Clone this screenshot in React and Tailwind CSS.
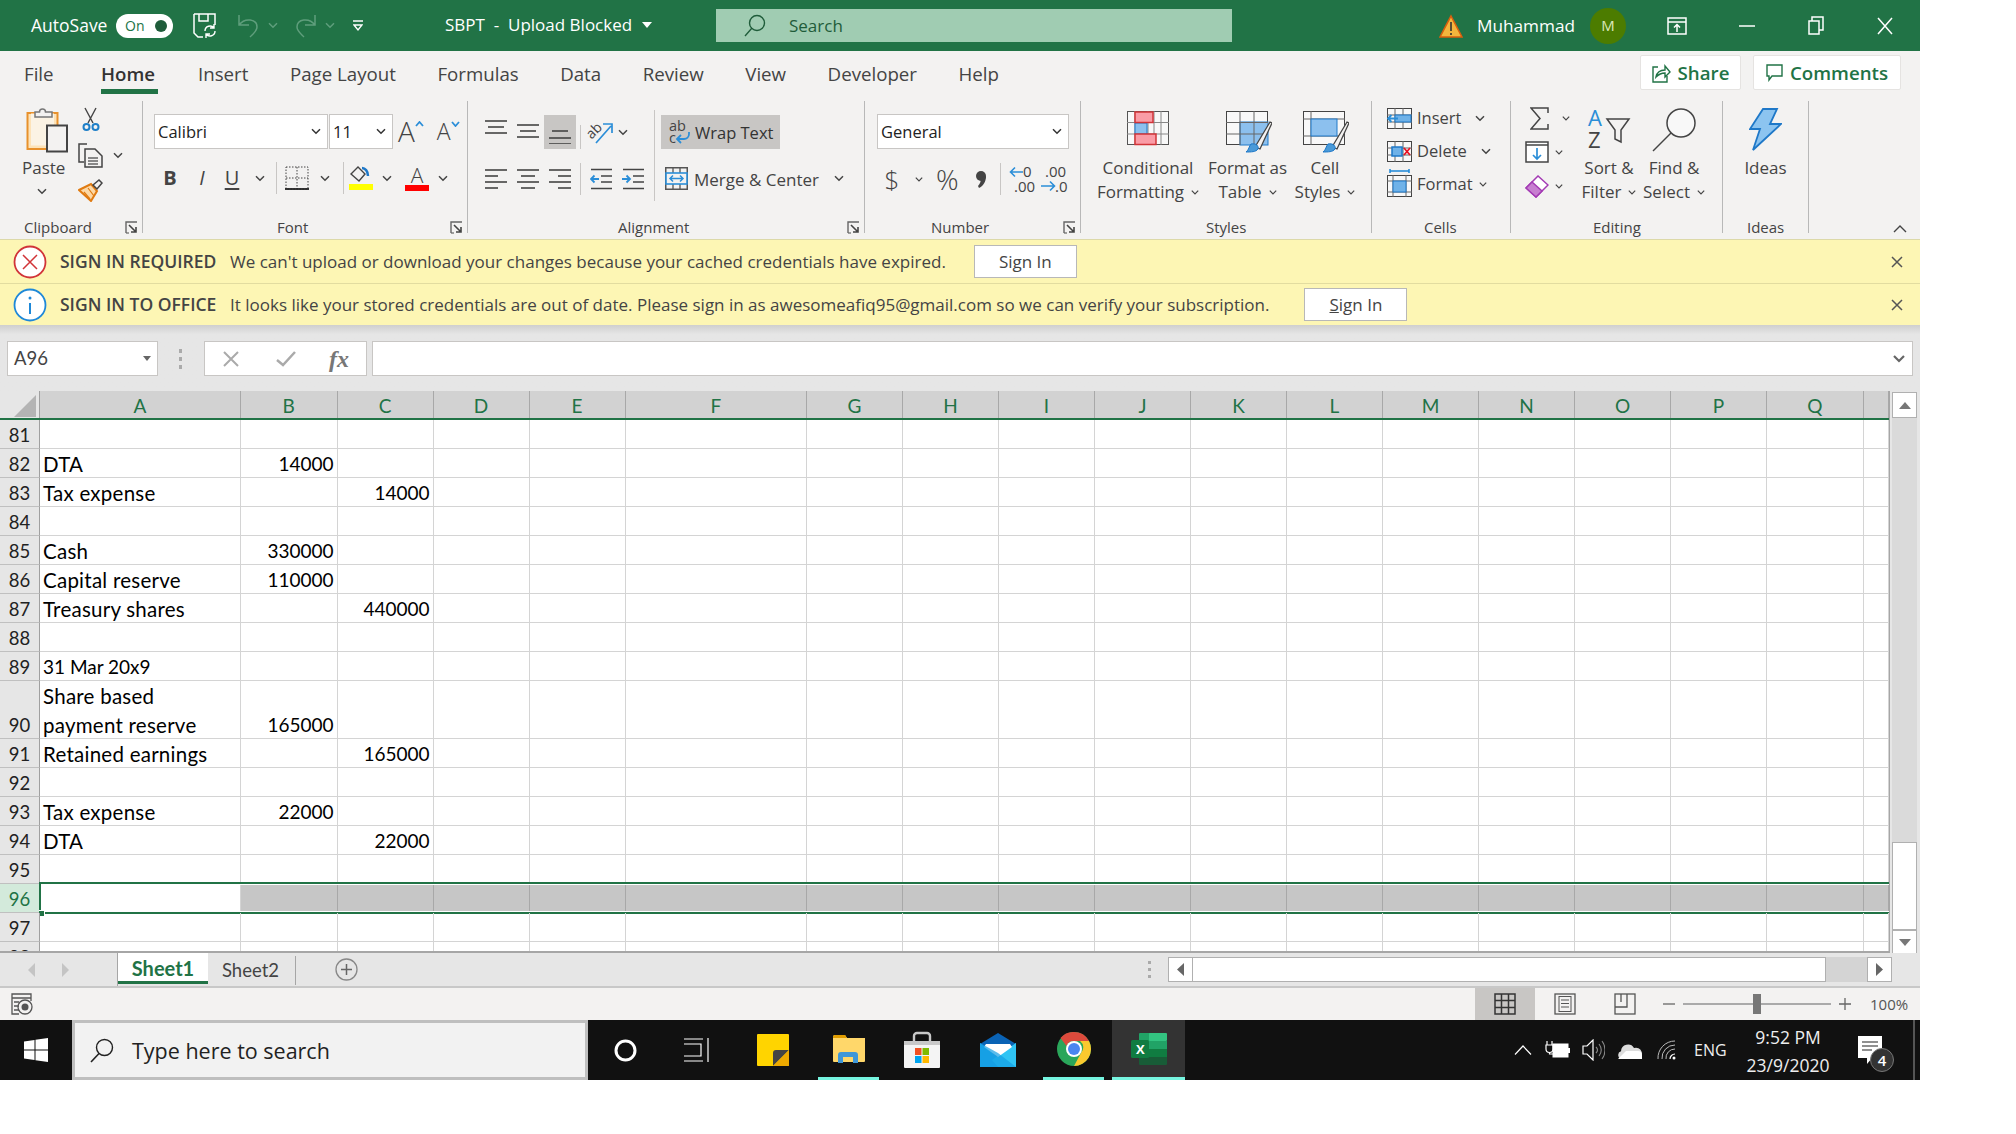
import React from "react";

const Chev = ({ c = "#444", w = 10, className = "" }) => (
  <svg width={w} height="7" viewBox="0 0 10 7" className={"shrink-0 " + className}>
    <path d="M1 1.2 5 5.2 9 1.2" fill="none" stroke={c} strokeWidth="1.5" />
  </svg>
);

const Paste = () => (
  <svg width="42" height="46" viewBox="0 0 42 46">
    <rect x="1.5" y="6" width="30" height="36" fill="#fde3b8" stroke="#e8912c" strokeWidth="2" />
    <rect x="5" y="6.5" width="23" height="32" fill="#fbf3e4" />
    <path d="M9 10V5h4.5a3 3 0 0 1 6 0H26v5z" fill="#f3f2f1" stroke="#777" strokeWidth="1.5" />
    <rect x="21" y="18.5" width="20" height="26" fill="#f3f2f1" stroke="#444" strokeWidth="2" />
  </svg>
);
const Scissors = () => (
  <svg width="18" height="25" viewBox="0 0 18 25">
    <path d="M3 1 11 16M14 1 6 16" stroke="#444" strokeWidth="1.4" fill="none" />
    <circle cx="4.5" cy="20" r="3" fill="none" stroke="#1e7fc8" strokeWidth="2" />
    <circle cx="13.5" cy="20" r="3" fill="none" stroke="#1e7fc8" strokeWidth="2" />
  </svg>
);
const CopyI = () => (
  <svg width="25" height="25" viewBox="0 0 25 25">
    <path d="M9 1H1v18h5" fill="none" stroke="#444" strokeWidth="1.5" />
    <path d="M7 6h10l7 7v11H7z" fill="#f3f2f1" stroke="#444" strokeWidth="1.5" />
    <path d="M10 15h10M10 18h10M10 21h10" stroke="#666" strokeWidth="1.3" />
  </svg>
);
const Painter = () => (
  <svg width="25" height="23" viewBox="0 0 25 23">
    <path d="M1 11 13 5l6 7-6 10z" fill="#fcd9a8" stroke="#e07b12" strokeWidth="2" />
    <path d="M6 13l6 7M10 9l6 8" stroke="#e07b12" strokeWidth="1.2" />
    <path d="M15 6 21 1l3 3-5 6z" fill="#f3f2f1" stroke="#444" strokeWidth="1.5" />
  </svg>
);
const Launcher = () => (
  <svg width="13" height="13" viewBox="0 0 13 13" className="shrink-0">
    <path d="M1 12V1h11" fill="none" stroke="#666" strokeWidth="1.4" />
    <path d="M4 4l7 7M11 6v5H6" fill="none" stroke="#444" strokeWidth="1.6" />
    <path d="M1 12h3" stroke="#666" strokeWidth="1.2" />
  </svg>
);
const Lines = ({ rows }) => (
  <svg width="22" height="26" viewBox="0 0 22 26">
    {rows.map(([y, x1, x2], i) => (
      <path key={i} d={`M${x1} ${y}H${x2}`} stroke="#444" strokeWidth="1.6" />
    ))}
  </svg>
);
const Orient = () => (
  <svg width="26" height="24" viewBox="0 0 26 24" className="overflow-visible">
    <text x="0" y="15" fontSize="14" fill="#444" transform="rotate(-45 8 12)" fontFamily="Open Sans">ab</text>
    <path d="M9 23 24 6M16 4h9v9" fill="none" stroke="#2b8ed8" strokeWidth="1.7" />
  </svg>
);
const Indent = ({ dir }) => (
  <svg width="22" height="22" viewBox="0 0 22 22">
    <path d="M1 1.5h21M11 8h11M11 14h11M1 20.5h21" stroke="#444" strokeWidth="1.6" />
    {dir === "l" ? (
      <path d="M1 11h8M4.500 7.500 1 11l3.500 3.500" fill="none" stroke="#2b8ed8" strokeWidth="1.8" />
    ) : (
      <path d="M0 11h8M4.500 7.500 8 11l-3.500 3.500" fill="none" stroke="#2b8ed8" strokeWidth="1.8" />
    )}
  </svg>
);
const WrapI = () => (
  <svg width="22" height="25" viewBox="0 0 22 25" className="overflow-visible shrink-0">
    <text x="0" y="11" fontSize="14.500" fill="#444" fontFamily="Open Sans">ab</text>
    <text x="0" y="23" fontSize="14.500" fill="#444" fontFamily="Open Sans">c</text>
    <path d="M20 12v2a5 5 0 0 1-5 5H9M12 15l-4 4 4 4" fill="none" stroke="#2b8ed8" strokeWidth="1.8" />
  </svg>
);
const MergeI = () => (
  <svg width="23" height="23" viewBox="0 0 23 23" className="shrink-0">
    <rect x="0.750" y="0.750" width="21.500" height="21.500" fill="none" stroke="#555" strokeWidth="1.500" />
    <path d="M8 1v5M15 1v5M8 17v5M15 17v5" stroke="#555" strokeWidth="1.300" />
    <rect x="1" y="6" width="21" height="11" fill="#f3f2f1" stroke="#2b8ed8" strokeWidth="1.600" />
    <path d="M5 11.500h13M8 8.500l-3 3 3 3M15 8.500l3 3-3 3" fill="none" stroke="#2b8ed8" strokeWidth="1.500" />
  </svg>
);
const CondI = () => (
  <svg width="42" height="35" viewBox="0 0 42 35">
    <rect x="0.500" y="0.500" width="41" height="33" fill="#f8f8f8" stroke="#555" />
    <path d="M8 0v34M21 0v34M27 0v34M34 0v34M0 11.500h42M0 23h42" stroke="#888" />
    <rect x="8" y="12" width="12" height="11" fill="#8cc0ee" stroke="#1e78c8" />
    <rect x="8" y="1" width="18" height="10.500" fill="#fa9ca6" stroke="#d13438" strokeWidth="1.500" />
    <rect x="8" y="23" width="21" height="10.500" fill="#fa9ca6" stroke="#d13438" strokeWidth="1.500" />
  </svg>
);
const Brush = () => (
  <g>
    <path d="M29 36 44 11l2 1-12 26z" fill="#f3f2f1" stroke="#444" strokeWidth="1.300" />
    <path d="M25 33c5-1 8 2 7 5-2 3-7 3-12 3 3-2 3-6 5-8z" fill="#4a9ad8" stroke="#1e78c8" />
  </g>
);
const FmtTableI = () => (
  <svg width="46" height="42" viewBox="0 0 46 42">
    <rect x="0.500" y="0.500" width="41" height="33" fill="#f8f8f8" stroke="#444" />
    <rect x="14" y="11" width="28" height="23" fill="#8cc0ee" stroke="#1e78c8" />
    <path d="M14 0v34M28 0v34M0 11.500h42M0 23h42" stroke="#666" />
    <Brush />
  </svg>
);
const CellStyleI = () => (
  <svg width="46" height="42" viewBox="0 0 46 42">
    <rect x="0.500" y="0.500" width="41" height="33" fill="#f8f8f8" stroke="#444" />
    <path d="M8 0v34M0 8h42M0 25h42" stroke="#666" />
    <rect x="8" y="8" width="26" height="17" fill="#8cc0ee" stroke="#1e78c8" />
    <Brush />
  </svg>
);
const CellGrid = ({ children }) => (
  <svg width="25" height="23" viewBox="0 0 25 23">
    <rect x="0.500" y="1.500" width="24" height="20" fill="#f8f8f8" stroke="#444" />
    <path d="M8 1v21M16 1v21M0 8h25M0 15h25" stroke="#666" />
    {children}
  </svg>
);
const Bolt = () => (
  <svg width="33" height="43" viewBox="0 0 33 43">
    <path d="M14 1h14l-7 15h11L4 42l7-21H1z" fill="#8cc4f0" stroke="#1e78c8" strokeWidth="1.800" />
  </svg>
);
const Group = ({ w, pl, label, launcher, body, children }) => (
  <div className={"flex flex-col h-[132px] shrink-0 border-r border-[#b8b8b8] " + w}>
    <div className={"flex-1 min-h-0 " + body}>{children}</div>
    <div className={"flex items-center h-[24px] pt-[13px] text-[15px] text-[#444] pr-[4px] " + pl}>
      <span>{label}</span>
      {launcher && <span className="ml-auto"><Launcher /></span>}
    </div>
  </div>
);
const Big = ({ w, icon, l1, l2, iconH = "h-[48px]" }) => (
  <div className={"flex flex-col items-center shrink-0 " + w}>
    <div className={"flex items-start justify-center " + iconH}>{icon}</div>
    <div className="leading-[24px] text-[17px] text-[#444] whitespace-nowrap">{l1}</div>
    {l2 && <div className="leading-[24px] text-[17px] text-[#444] whitespace-nowrap flex items-center gap-[7px]">{l2}<Chev w={8} /></div>}
  </div>
);
const Sel = ({ w, children }) => (
  <div className={"h-[35px] bg-white border border-[#c8c6c4] flex items-center justify-between px-[3px] pr-[6px] text-[16.500px] text-[#222] " + w}>
    <span className="pt-[2px]">{children}</span>
    <Chev c="#333" />
  </div>
);

const Tabs = ["Insert", "Page Layout", "Formulas", "Data", "Review", "View", "Developer", "Help"];
const TabRow = () => (
  <div className="h-[50px] bg-[#f3f2f1] flex items-start pl-[24px] shrink-0 text-[18.700px] text-[#444]">
    <div className="flex pt-[10px] leading-[26px]">
      <span className="w-[77px]">File</span>
      <span className="w-[57px] mr-[40px] text-[#333] font-semibold border-b-[5px] border-[#217346] h-[33px]">Home</span>
      <div className="flex gap-[41.500px]">
        {Tabs.map((t) => <span key={t}>{t}</span>)}
      </div>
    </div>
    <div className="ml-auto flex gap-[12px] pt-[4px] pr-[19px] text-[#217346] font-semibold">
      <div className="h-[35px] w-[101px] bg-white border border-[#e5e3e1] rounded-[2px] flex items-center justify-center gap-[7px] pt-[1px]">
        <svg width="19" height="20" viewBox="0 0 19 20"><path d="M6 4H1v15h14v-6" fill="none" stroke="#217346" strokeWidth="1.400" /><path d="M4 14c1-5 4-7 9-7V3l5 6-5 5V10c-4 0-6 1-9 4z" fill="none" stroke="#217346" strokeWidth="1.400" /></svg>
        <span>Share</span>
      </div>
      <div className="h-[35px] w-[148px] bg-white border border-[#e5e3e1] rounded-[2px] flex items-center justify-center gap-[7px] pt-[1px]">
        <svg width="17" height="18" viewBox="0 0 17 18"><path d="M1 1h15v11H6l-3 4v-4H1z" fill="none" stroke="#217346" strokeWidth="1.400" /></svg>
        <span>Comments</span>
      </div>
    </div>
  </div>
);

const TitleBar = () => (
  <div className="h-[51px] bg-[#217346] text-white flex items-center shrink-0 text-[17.500px]">
    <span className="ml-[31px] w-[85px]">AutoSave</span>
    <div className="w-[57px] h-[24px] rounded-full bg-white flex items-center justify-between pl-[9px] pr-[6px] text-[#217346] text-[14px] shrink-0">
      <span>On</span>
      <span className="w-[12px] h-[12px] rounded-full bg-[#1f5c3a]" />
    </div>
    <svg width="24" height="25" viewBox="0 0 24 25" className="ml-[20px] shrink-0">
      <path d="M1 1h21v11M1 1v19l4 4h5M6 1v7h9V1" fill="none" stroke="#fff" strokeWidth="1.500" />
      <path d="M12 18a5 5 0 0 1 9-3M22 18a5 5 0 0 1-9 3M21 11v4h-4M13 25v-4h4" fill="none" stroke="#fff" strokeWidth="1.400" />
    </svg>
    <svg width="22" height="24" viewBox="0 0 22 24" className="ml-[20px] shrink-0">
      <path d="M2 1v10h10M2 11C8 3 20 5 20 13c0 4-4 7-7 10" fill="none" stroke="#5f9e7c" strokeWidth="1.500" />
    </svg>
    <Chev c="#5f9e7c" className="ml-[9px]" />
    <svg width="22" height="24" viewBox="0 0 22 24" className="ml-[17px] shrink-0">
      <path d="M20 1v10H10M20 11C14 3 2 5 2 13c0 4 4 7 7 10" fill="none" stroke="#5f9e7c" strokeWidth="1.500" />
    </svg>
    <Chev c="#5f9e7c" className="ml-[8px]" />
    <svg width="10" height="12" viewBox="0 0 10 12" className="ml-[18px] shrink-0">
      <path d="M0 1h10M1 5l4 5 4-5z" fill="none" stroke="#fff" strokeWidth="1.400" />
    </svg>
    <span className="ml-[82px] w-[187px] whitespace-pre text-[17px] -mt-[2px]">SBPT  -  Upload Blocked</span>
    <svg width="10" height="6" viewBox="0 0 10 6" className="ml-[10px] shrink-0 -mt-[2px]"><path d="M0 0h10L5 6z" fill="#fff" /></svg>
    <div className="ml-[64px] w-[516px] h-[33px] bg-[#a0ccb2] flex items-center text-[#1f5c3a] shrink-0">
      <svg width="22" height="23" viewBox="0 0 22 23" className="ml-[28px]"><circle cx="13" cy="9" r="7.500" fill="none" stroke="#1f5c3a" strokeWidth="1.400" /><path d="M8 14 1 22" stroke="#1f5c3a" strokeWidth="1.400" /></svg>
      <span className="ml-[23px] text-[17px]">Search</span>
    </div>
    <svg width="24" height="24" viewBox="0 0 24 24" className="ml-[207px] shrink-0">
      <path d="M12 2 23 23H1z" fill="#f5b53d" stroke="#d95f0e" strokeWidth="1.600" />
      <path d="M12 8v9M12 19v2" stroke="#333" strokeWidth="1.600" />
    </svg>
    <span className="ml-[14px] w-[113px] text-[17.200px]">Muhammad</span>
    <span className="w-[36px] h-[36px] rounded-full bg-[#4c7c00] flex items-center justify-center text-[15px] shrink-0 text-[#dbe8b8]">M</span>
    <svg width="20" height="18" viewBox="0 0 20 18" className="ml-[41px] shrink-0">
      <rect x="1" y="1" width="18" height="16" fill="none" stroke="#fff" strokeWidth="1.500" />
      <path d="M1 5h18M10 15V8M7 10.500 10 7.500l3 3" fill="none" stroke="#fff" strokeWidth="1.500" />
    </svg>
    <svg width="16" height="2" viewBox="0 0 16 2" className="ml-[52px] shrink-0"><path d="M0 1h16" stroke="#fff" strokeWidth="1.500" /></svg>
    <svg width="16" height="19" viewBox="0 0 16 19" className="ml-[53px] shrink-0">
      <rect x="1" y="5" width="10" height="13" fill="none" stroke="#fff" strokeWidth="1.500" />
      <path d="M4 5V1h11v13h-4" fill="none" stroke="#fff" strokeWidth="1.500" />
    </svg>
    <svg width="16" height="18" viewBox="0 0 16 18" className="ml-[53px] shrink-0"><path d="M1 1l14 16M15 1 1 17" stroke="#fff" strokeWidth="1.500" /></svg>
  </div>
);

const Sep = ({ h = "h-[24px]", c = "" }) => <div className={"w-px bg-[#c8c6c4] shrink-0 " + h + " " + c} />;

const Ribbon = () => (
  <div className="h-[138px] bg-[#f3f2f1] flex shrink-0 text-[#444]">
    <Group w="w-[143px]" pl="pl-[24px]" label="Clipboard" launcher body="flex">
      <div className="w-[78px] pl-[26px] pt-[6px] flex flex-col items-start shrink-0">
        <Paste />
        <span className="text-[17px] leading-[24px] -ml-[4px] mt-[3px]">Paste</span>
        <Chev c="#444" className="ml-[11px] mt-[8px]" />
      </div>
      <div className="flex flex-col pt-[6px]">
        <div className="h-[25px] pl-[4px]"><Scissors /></div>
        <div className="h-[25px] mt-[11px] flex items-center gap-[10px]"><CopyI /><Chev /></div>
        <div className="h-[23px] mt-[11px]"><Painter /></div>
      </div>
    </Group>

    <Group w="w-[325px]" pl="pl-[134px]" label="Font" launcher body="flex flex-col pl-[11px] pt-[13px]">
      <div className="flex items-center h-[35px]">
        <Sel w="w-[174px]">Calibri</Sel>
        <Sel w="w-[64px] ml-[1px]">11</Sel>
        <span className="ml-[5px] text-[28px] font-light leading-[35px] text-[#444]">A</span>
        <svg width="9" height="6" viewBox="0 0 9 6" className="self-start mt-[7px]"><path d="M1 5l3.500-4L8 5" fill="none" stroke="#2b8ed8" strokeWidth="1.800" /></svg>
        <span className="ml-[13px] text-[23px] leading-[35px] font-light text-[#444]">A</span>
        <svg width="9" height="6" viewBox="0 0 9 6" className="self-start mt-[7px]"><path d="M1 1l3.500 4L8 1" fill="none" stroke="#2b8ed8" strokeWidth="1.800" /></svg>
      </div>
      <div className="flex items-center h-[34px] mt-[12px]">
        <span className="w-[32px] text-[20px] font-bold text-[#444] text-center">B</span>
        <span className="w-[32px] text-[20px] italic text-[#444] text-center">I</span>
        <span className="w-[28px] text-[20px] text-[#444] text-center underline underline-offset-[3px] decoration-[1.500px]">U</span>
        <Chev className="ml-[9px]" />
        <Sep h="h-[32px]" c="ml-[11px]" />
        <svg width="24" height="24" viewBox="0 0 24 24" className="ml-[8px]">
          <rect x="1" y="1" width="22" height="22" fill="none" stroke="#444" strokeDasharray="1.500 1.500" />
          <path d="M12 1v22M1 12h22" stroke="#444" strokeDasharray="1.500 1.500" />
          <path d="M0 23h24" stroke="#222" strokeWidth="1.800" />
        </svg>
        <Chev className="ml-[11px]" />
        <Sep h="h-[32px]" c="ml-[13px]" />
        <svg width="24" height="25" viewBox="0 0 24 25" className="ml-[5px]">
          <path d="M2 8 9 1l7 7-6 7z" fill="#f3f2f1" stroke="#444" strokeWidth="1.400" />
          <path d="M13 2c3 0 6 3 6 8" fill="none" stroke="#1e78c8" strokeWidth="2.500" />
          <rect x="0" y="18" width="24" height="6" fill="#ffff00" />
        </svg>
        <Chev className="ml-[9px]" />
        <div className="ml-[13px] w-[24px] h-[25px] flex flex-col items-center">
          <span className="text-[21px] leading-[19px] font-light text-[#444]">A</span>
          <span className="w-[24px] h-[6px] bg-[#ff0000]" />
        </div>
        <Chev className="ml-[9px]" />
      </div>
    </Group>

    <Group w="w-[397px]" pl="pl-[150px]" label="Alignment" launcher body="flex pl-[12px] pt-[14px]">
      <div className="grid grid-cols-[32px_32px_32px] grid-rows-[34px_34px] gap-y-[13px] w-[96px] shrink-0">
        <div className="flex justify-center items-start pt-[3px]"><Lines rows={[[3, 0, 22], [9, 3, 19], [15, 0, 22]]} /></div>
        <div className="flex justify-center items-start pt-[3px]"><Lines rows={[[7, 0, 22], [13, 3, 19], [19, 0, 22]]} /></div>
        <div className="flex justify-center items-start pt-[3px] bg-[#c8c6c4]"><Lines rows={[[13, 3, 19], [20, 0, 22], [26, 0, 22]]} /></div>
        <div className="flex justify-center items-center"><Lines rows={[[4, 0, 22], [10, 0, 13], [16, 0, 22], [22, 0, 13]]} /></div>
        <div className="flex justify-center items-center"><Lines rows={[[4, 0, 22], [10, 4, 18], [16, 0, 22], [22, 4, 18]]} /></div>
        <div className="flex justify-center items-center"><Lines rows={[[4, 0, 22], [10, 9, 22], [16, 0, 22], [22, 9, 22]]} /></div>
      </div>
      <div className="flex flex-col gap-[13px] w-[78px] pl-[4px] shrink-0">
        <div className="h-[34px] flex items-center">
          <Sep c="mt-[10px]" />
          <span className="ml-[6px]"><Orient /></span>
          <Chev className="ml-[5px]" />
        </div>
        <div className="h-[34px] flex items-center">
          <Sep h="h-[32px]" />
          <span className="ml-[9px]"><Indent dir="l" /></span>
          <span className="ml-[10px]"><Indent dir="r" /></span>
        </div>
      </div>
      <Sep h="h-[91px]" c="-mt-[5px]" />
      <div className="flex flex-col gap-[12px] pl-[6px] text-[16.500px]">
        <div className="w-[119px] h-[34px] bg-[#c8c6c4] flex items-center pl-[8px] gap-[4px] text-[#333]"><WrapI /><span className="pt-[2px]">Wrap Text</span></div>
        <div className="h-[34px] flex items-center pl-[4px] text-[17px]"><MergeI /><span className="ml-[6px] w-[140px] whitespace-nowrap pt-[3px]">Merge &amp; Center</span><Chev /></div>
      </div>
    </Group>

    <Group w="w-[216px]" pl="pl-[66px]" label="Number" launcher body="flex flex-col pl-[12px] pt-[13px]">
      <Sel w="w-[192px]">General</Sel>
      <div className="flex items-center h-[34px] mt-[13px] text-[#444]">
        <span className="w-[30px] text-center text-[26px] font-light leading-[34px]">$</span>
        <Chev w={8} className="ml-[8px]" />
        <span className="ml-[13px] w-[36px] text-[28px] font-light leading-[34px]">%</span>
        <svg width="14" height="24" viewBox="0 0 14 24" className="ml-[2px] shrink-0"><circle cx="7" cy="9" r="5" fill="#444" /><path d="M12 9c0 6-3 10-7 12l-1-2c2-2 3-5 3-8z" fill="#444" /></svg>
        <Sep h="h-[32px]" c="ml-[12px]" />
        <svg width="26" height="28" viewBox="0 0 26 28" className="ml-[8px] overflow-visible shrink-0">
          <text x="14" y="12" fontSize="15" fill="#444" fontFamily="Open Sans">0</text>
          <text x="5" y="27" fontSize="15" fill="#444" fontFamily="Open Sans">.00</text>
          <path d="M14 7H2M6 2.500 1.500 7 6 11.500" fill="none" stroke="#2b8ed8" strokeWidth="1.600" />
        </svg>
        <svg width="26" height="28" viewBox="0 0 26 28" className="ml-[6px] overflow-visible shrink-0">
          <text x="4" y="12" fontSize="15" fill="#444" fontFamily="Open Sans">.00</text>
          <text x="14" y="27" fontSize="15" fill="#444" fontFamily="Open Sans">.0</text>
          <path d="M0 21h13M9 16.500 13.500 21 9 25.500" fill="none" stroke="#2b8ed8" strokeWidth="1.600" />
        </svg>
      </div>
    </Group>

    <Group w="w-[291px]" pl="pl-[125px]" label="Styles" body="flex pl-[12px] pt-[7px]">
      <Big w="w-[110px]" icon={<div className="pt-[3px]"><CondI /></div>} l1="Conditional" l2="Formatting" />
      <Big w="w-[89px]" icon={<div className="pt-[3px] pl-[2px]"><FmtTableI /></div>} l1="Format as" l2="Table" />
      <Big w="w-[66px]" icon={<div className="pt-[3px] pl-[2px]"><CellStyleI /></div>} l1="Cell" l2="Styles" />
    </Group>

    <Group w="w-[139px]" pl="pl-[52px]" label="Cells" body="flex flex-col pl-[15px] pt-[1px] text-[16.500px]">
      <div className="h-[33px] flex items-center">
        <CellGrid><rect x="8" y="8" width="16" height="7" fill="#6fb2e8" stroke="#1e78c8" /><path d="M11 11.500H1M4.500 8 1 11.500 4.500 15" fill="none" stroke="#2b8ed8" strokeWidth="1.800" /></CellGrid>
        <span className="ml-[5px] w-[58px]">Insert</span><Chev />
      </div>
      <div className="h-[33px] flex items-center">
        <CellGrid><rect x="5" y="7" width="10" height="9" fill="#6fb2e8" stroke="#1e78c8" strokeWidth="1.500" /><path d="M17 8l6 7M23 8l-6 7" stroke="#e81123" strokeWidth="1.800" /></CellGrid>
        <span className="ml-[5px] w-[64px]">Delete</span><Chev />
      </div>
      <div className="h-[33px] flex items-center">
        <svg width="25" height="29" viewBox="0 0 25 29" className="-mt-[4px]">
          <path d="M3 3h19M3 1v4M22 1v4" stroke="#1e88d8" strokeWidth="1.500" />
          <rect x="0.500" y="7.500" width="24" height="21" fill="#f8f8f8" stroke="#444" />
          <path d="M6 7v22M19 7v22M0 13h25M0 24h25" stroke="#666" />
          <rect x="6" y="13" width="13" height="11" fill="#6fb2e8" stroke="#1e78c8" />
        </svg>
        <span className="ml-[5px] w-[62px]">Format</span><Chev w={8} />
      </div>
    </Group>

    <Group w="w-[212px]" pl="pl-[82px]" label="Editing" body="flex pl-[14px]">
      <div className="w-[53px] shrink-0 flex flex-col">
        <div className="h-[34px] flex items-center pl-[5px]">
          <svg width="19" height="23" viewBox="0 0 19 23" className="shrink-0 mt-[1px]"><path d="M18 6V1H1l9 10.500L1 22h17v-5" fill="none" stroke="#444" strokeWidth="1.500" /></svg>
          <Chev w={8} className="ml-[13px]" />
        </div>
        <div className="h-[34px] flex items-center">
          <svg width="24" height="22" viewBox="0 0 24 22">
            <rect x="1" y="1" width="22" height="20" fill="#fff" stroke="#444" strokeWidth="1.500" />
            <path d="M1 4h22" stroke="#444" strokeWidth="1.500" />
            <path d="M12 7v11M8 14l4 4 4-4" fill="none" stroke="#2b8ed8" strokeWidth="1.700" />
          </svg>
          <Chev w={8} className="ml-[6px]" />
        </div>
        <div className="h-[34px] flex items-center">
          <svg width="24" height="23" viewBox="0 0 24 23">
            <path d="M1 13 13 1l10 9L11 22z" fill="#fff" stroke="#a33ab4" strokeWidth="1.500" />
            <path d="M1 13l6-6 10 9-6 6z" fill="#c77fd0" stroke="#a33ab4" strokeWidth="1.500" />
          </svg>
          <Chev w={8} className="ml-[6px]" />
        </div>
      </div>
      <div className="pt-[7px] flex">
        <Big w="w-[62px]" icon={
          <svg width="42" height="41" viewBox="0 0 42 41" className="overflow-visible">
            <text x="0" y="18" fontSize="22" fill="#2b8ed8" fontFamily="Open Sans">A</text>
            <text x="0" y="40" fontSize="22" fill="#444" fontFamily="Open Sans">Z</text>
            <path d="M19 11h22l-8 11v12l-6-3V22z" fill="none" stroke="#444" strokeWidth="1.500" />
          </svg>} l1="Sort &amp;" l2="Filter" />
        <Big w="w-[68px]" icon={
          <svg width="44" height="44" viewBox="0 0 44 44">
            <circle cx="29" cy="15" r="14" fill="#f8f8f8" stroke="#444" strokeWidth="1.500" />
            <path d="M19 25 1 43" stroke="#444" strokeWidth="1.500" />
          </svg>} l1="Find &amp;" l2="Select" />
      </div>
    </Group>

    <Group w="w-[86px]" pl="pl-[24px]" label="Ideas" body="flex justify-center pt-[7px]">
      <Big w="w-[60px]" icon={<Bolt />} l1="Ideas" />
    </Group>

    <div className="flex-1 flex items-end justify-end pr-[13px] pb-[6px]">
      <svg width="14" height="8" viewBox="0 0 14 8"><path d="M1 7l6-6 6 6" fill="none" stroke="#444" strokeWidth="1.400" /></svg>
    </div>
  </div>
);

const MsgBar = ({ icon, title, text, h, under, gap }) => (
  <div className={"bg-[#fdf6b4] flex items-center shrink-0 text-[17px] text-[#444] pl-[13px] pr-[17px] " + h}>
    {icon}
    <span className="ml-[13px] w-[170px] text-[17.500px] font-semibold text-[#444] shrink-0 whitespace-nowrap">{title}</span>
    <span className="whitespace-nowrap">{text}</span>
    <span className={"h-[33px] w-[103px] bg-white border border-[#b8b8b8] flex items-center justify-center shrink-0 " + gap}>{under ? <><span className="underline">S</span>ign In</> : "Sign In"}</span>
    <svg width="12" height="12" viewBox="0 0 12 12" className="ml-auto"><path d="M1 1l10 10M11 1 1 11" stroke="#555" strokeWidth="1.500" /></svg>
  </div>
);

const GRID = "grid grid-cols-[40px_201px_96.500px_96px_96px_96px_181.500px_96px_96px_96px_96px_96px_96px_96px_96px_96px_96px_96.800px_1fr]";
const COLS = ["A", "B", "C", "D", "E", "F", "G", "H", "I", "J", "K", "L", "M", "N", "O", "P", "Q", ""];
const DATA = {
  82: ["DTA", "14000"],
  83: ["Tax expense", "", "14000"],
  85: ["Cash", "330000"],
  86: ["Capital reserve", "110000"],
  87: ["Treasury shares", "", "440000"],
  89: ["31 Mar 20x9"],
  90: [["Share based", "payment reserve"], "165000"],
  91: ["Retained earnings", "", "165000"],
  93: ["Tax expense", "22000"],
  94: ["DTA", "", "22000"],
};

const Label = ({ v }) => {
  if (Array.isArray(v)) return v.map((t, i) => <span key={t} className={"text-[20.500px] tracking-[0.250px] " + (i === 0 ? "mb-[3px]" : "")}>{t}</span>);
  if (/\d/.test(v)) return <span className="text-[19px]">{v}</span>;
  return <span className="text-[20.500px] tracking-[0.250px]">{v}</span>;
};

const Row = ({ n }) => {
  const d = DATA[n] || [];
  const sel = n === 96;
  return (
    <div className={GRID + " relative " + (n === 90 ? "h-[58px]" : "h-[29px]")}>
      <div className={"border-r border-b border-[#c0c0c0] border-r-[#a0a0a0] flex justify-center items-end text-[18.500px] leading-[26px] " + (sel ? "bg-[#d3eadb] text-[#217346]" : "bg-[#e6e6e6] text-[#222]")}>{n}</div>
      {COLS.map((c, i) => {
        const v = d[i];
        return (
          <div key={i} className={"border-r border-b flex text-black leading-[26px] whitespace-nowrap " + (i === 0 ? "pl-[3px] flex-col justify-end " : "justify-end items-end pr-[3px] ") + (sel ? (i === 0 ? "bg-white border-[#d4d4d4]" : "bg-[#c6c6c6] border-[#a8a8a8]") : "border-[#d4d4d4]")}>
            {v ? <Label v={v} /> : null}
          </div>
        );
      })}
      {sel && (
        <div className="absolute left-[39px] right-0 -top-[2px] -bottom-[1px] border-y-2 border-l-2 border-[#217346] pointer-events-none">
          <div className="h-full border-y border-white" />
          <span className="absolute -left-[2px] -bottom-[4px] w-[6px] h-[6px] bg-[#217346] border-r border-t border-white" />
        </div>
      )}
    </div>
  );
};

const ROWS = Array.from({ length: 18 }, (_, i) => 81 + i);

const Sheet = () => (
  <div className="h-[562px] flex shrink-0 bg-[#e6e6e6]">
    <div className="w-[1890px] h-[562px] overflow-hidden border-b-[2px] border-r border-[#a6a6a6] bg-white font-['Lato',sans-serif] shrink-0">
      <div className={GRID + " h-[29px] bg-[#d2d2d2] border-b-[2px] border-[#217346]"}>
        <div className="bg-[#e6e6e6] flex items-end justify-end pr-[3px] pb-[1px] border-r border-[#a0a0a0]">
          <svg width="22" height="22" viewBox="0 0 22 22"><path d="M22 0v22H0z" fill="#b4b4b4" /></svg>
        </div>
        {COLS.map((c, i) => (
          <div key={i} className="border-r border-[#a8a8a8] flex items-center justify-center pt-[3px] text-[19px] text-[#217346] leading-[24px]">{c}</div>
        ))}
      </div>
      {ROWS.map((n) => <Row key={n} n={n} />)}
    </div>
    <div className="flex-1 pl-[2px] pr-[3px] pt-[1px] flex flex-col">
      <div className="h-[26px] bg-white border border-[#b0b0b0] flex items-center justify-center shrink-0">
        <svg width="12" height="7" viewBox="0 0 12 7"><path d="M6 0l6 7H0z" fill="#777" /></svg>
      </div>
      <div className="h-[424px] bg-[#dadada] shrink-0" />
      <div className="h-[88px] bg-white border border-[#b0b0b0] shrink-0" />
      <div className="h-[25px] bg-white border border-[#b0b0b0] flex items-center justify-center shrink-0">
        <svg width="12" height="7" viewBox="0 0 12 7"><path d="M6 7 0 0h12z" fill="#777" /></svg>
      </div>
    </div>
  </div>
);

const SheetTabs = () => (
  <div className="h-[35px] bg-[#e6e6e6] border-b-2 border-[#c8c8c8] flex items-stretch shrink-0 text-[#444] text-[17px]">
    <div className="w-[118px] flex items-center pl-[28px] gap-[27px] border-r border-[#a6a6a6]">
      <svg width="7" height="14" viewBox="0 0 7 14"><path d="M7 0v14L0 7z" fill="#c4c4c4" /></svg>
      <svg width="7" height="14" viewBox="0 0 7 14"><path d="M0 0v14l7-7z" fill="#c4c4c4" /></svg>
    </div>
    <div className="w-[90px] h-[31px] bg-white border-b-[3px] border-[#217346] flex items-center justify-center pt-[1px] text-[#217346] font-bold font-['Lato',sans-serif] text-[20px]">Sheet1</div>
    <div className="w-[88px] h-[29px] mt-[3px] border-r border-[#a6a6a6] flex items-center justify-center pr-[2px] font-['Lato',sans-serif] text-[18.500px]">Sheet2</div>
    <div className="ml-[39px] flex items-center">
      <svg width="23" height="23" viewBox="0 0 23 23"><circle cx="11.500" cy="11.500" r="10.500" fill="none" stroke="#888" strokeWidth="1.300" /><path d="M11.500 6v11M6 11.500h11" stroke="#666" strokeWidth="1.500" /></svg>
    </div>
    <div className="ml-[790px] flex flex-col justify-center gap-[4px]">
      <span className="w-[3px] h-[3px] bg-[#aaa]" /><span className="w-[3px] h-[3px] bg-[#aaa]" /><span className="w-[3px] h-[3px] bg-[#aaa]" />
    </div>
    <div className="ml-[17px] mt-[4px] h-[25px] flex shrink-0">
      <div className="w-[25px] bg-white border border-[#b0b0b0] flex items-center justify-center"><svg width="7" height="13" viewBox="0 0 7 13"><path d="M7 0v13L0 6.500z" fill="#666" /></svg></div>
      <div className="w-[633px] bg-white border-y border-r border-[#b0b0b0]" />
      <div className="w-[41px] bg-[#d4d4d4]" />
      <div className="w-[25px] bg-white border border-[#b0b0b0] flex items-center justify-center"><svg width="7" height="13" viewBox="0 0 7 13"><path d="M0 0v13l7-6.500z" fill="#666" /></svg></div>
    </div>
  </div>
);

const StatusBar = () => (
  <div className="h-[32px] bg-[#f3f2f1] flex items-stretch shrink-0 text-[#555]">
    <div className="flex items-center pl-[11px]">
      <svg width="22" height="22" viewBox="0 0 22 22">
        <path d="M20 8V1H1v20h7" fill="none" stroke="#555" strokeWidth="1.300" />
        <path d="M1 5h19M3 9h5M3 13h5M3 17h5" stroke="#555" strokeWidth="1.300" />
        <circle cx="14" cy="14" r="7" fill="none" stroke="#555" strokeWidth="1.300" />
        <circle cx="14" cy="14" r="3.500" fill="#555" />
      </svg>
    </div>
    <div className="ml-[1442px] w-[60px] bg-[#c8c6c4] flex items-center justify-center shrink-0">
      <svg width="22" height="22" viewBox="0 0 22 22"><rect x="1" y="1" width="20" height="20" fill="none" stroke="#333" strokeWidth="1.500" /><path d="M7.500 1v20M14.500 1v20M1 7.500h20M1 14.500h20" stroke="#333" strokeWidth="1.500" /></svg>
    </div>
    <div className="w-[60px] flex items-center justify-center shrink-0">
      <svg width="22" height="22" viewBox="0 0 22 22"><rect x="1" y="1" width="20" height="20" fill="none" stroke="#555" strokeWidth="1.300" /><rect x="5" y="3.500" width="12" height="15" fill="none" stroke="#555" /><path d="M7 7h8M7 10.500h8M7 14h8" stroke="#555" strokeWidth="1.200" /></svg>
    </div>
    <div className="w-[60px] flex items-center justify-center shrink-0">
      <svg width="22" height="22" viewBox="0 0 22 22"><rect x="1" y="1" width="20" height="20" fill="none" stroke="#555" strokeWidth="1.300" /><path d="M1 14h12V1M7 1v8" fill="none" stroke="#555" strokeWidth="1.300" /></svg>
    </div>
    <div className="flex items-center ml-[8px]">
      <svg width="12" height="2" viewBox="0 0 12 2"><path d="M0 1h12" stroke="#666" strokeWidth="1.300" /></svg>
      <div className="ml-[8px] w-[148px] h-[2px] bg-[#aaa] flex items-center pl-[70px]">
        <span className="w-[8px] h-[20px] bg-[#777] shrink-0" />
      </div>
      <svg width="12" height="12" viewBox="0 0 12 12" className="ml-[8px]"><path d="M0 6h12M6 0v12" stroke="#666" strokeWidth="1.300" /></svg>
      <span className="ml-[19px] text-[15px]">100%</span>
    </div>
  </div>
);

const Taskbar = () => (
  <div className="h-[60px] bg-[#111] flex items-center shrink-0 relative">
    <div className="w-[72px] flex justify-center shrink-0">
      <svg width="24" height="24" viewBox="0 0 24 24"><path d="M0 3.500 10.500 2v9.500H0zM11.500 1.800 24 0v11.500H11.500zM0 12.500h10.500V22L0 20.500zM11.500 12.500H24V24l-12.500-1.800z" fill="#fff" /></svg>
    </div>
    <div className="w-[516px] h-[60px] bg-[#f2f2f2] border-[3px] border-[#bfbfbf] flex items-center shrink-0">
      <svg width="24" height="25" viewBox="0 0 24 25" className="ml-[15px]"><circle cx="14.500" cy="9.500" r="8" fill="none" stroke="#222" strokeWidth="1.400" /><path d="M9 15.500 1 24" stroke="#222" strokeWidth="1.600" /></svg>
      <span className="ml-[18px] text-[21.500px] text-[#222] pt-[3px]">Type here to search</span>
    </div>
    <svg width="23" height="23" viewBox="0 0 23 23" className="ml-[26px] shrink-0"><circle cx="11.500" cy="11.500" r="9.500" fill="none" stroke="#fff" strokeWidth="3" /></svg>
    <svg width="26" height="24" viewBox="0 0 26 24" className="ml-[47px] shrink-0"><path d="M0 1h19M0 23h19M0 6h17v12H0M24 0v24M24 8v4" fill="none" stroke="#fff" strokeWidth="1.200" /></svg>
    <svg width="32" height="32" viewBox="0 0 32 32" className="ml-[47px] shrink-0">
      <rect width="32" height="32" fill="#ffd400" rx="1" />
      <path d="M16 32V19a3 3 0 0 1 3-3h13L16 32z" fill="#444" />
      <path d="M32 16v15a1 1 0 0 1-1 1H16z" fill="#eeaa00" />
    </svg>
    <div className="ml-[29px] w-[61px] h-[60px] flex items-center justify-center shrink-0 border-b-[3px] border-[#76f5e0]">
      <svg width="32" height="28" viewBox="0 0 32 28"><path d="M0 2a2 2 0 0 1 2-2h10l2 3h18v23a1 1 0 0 1-1 1H1a1 1 0 0 1-1-1z" fill="#ffd76a" /><path d="M0 2a2 2 0 0 1 2-2h10l2 3H0z" fill="#e09c00" /><path d="M5 28V20a3 3 0 0 1 3-3h14a3 3 0 0 1 3 3v8h-5v-6H10v6z" fill="#3f97d8" /></svg>
    </div>
    <svg width="36" height="38" viewBox="0 0 36 38" className="ml-[25px] shrink-0">
      <path d="M10 12V5a3 3 0 0 1 3-3h10a3 3 0 0 1 3 3v7" fill="none" stroke="#c8c8c8" strokeWidth="2.400" />
      <rect y="10" width="36" height="27" fill="#f4f4f4" rx="1" />
      <rect y="10" width="36" height="4" fill="#c8c8c8" />
      <rect x="11" y="17" width="6.500" height="7" fill="#f25022" /><rect x="18.500" y="17" width="6.500" height="7" fill="#7fba00" /><rect x="11" y="25" width="6.500" height="7" fill="#00a4ef" /><rect x="18.500" y="25" width="6.500" height="7" fill="#ffb900" />
    </svg>
    <svg width="36" height="34" viewBox="0 0 36 34" className="ml-[40px] shrink-0">
      <path d="M0 11 18 0l18 11-18 12z" fill="#0a63b5" />
      <path d="M0 10 18 24 36 10v24H0z" fill="#1ca1e6" />
      <path d="M36 10v24H18l-6-7z" fill="#2fc4f4" />
      <path d="M4 14 6 11h24l2 3-14 10z" fill="#fff" />
      <path d="M0 10v24h36L18 20z" fill="#14a0e4" opacity="0.700" />
    </svg>
    <div className="ml-[27px] w-[61px] h-[60px] flex items-center justify-center shrink-0 border-b-[3px] border-[#76f5e0]">
      <svg width="34" height="34" viewBox="0 0 34 34">
        <circle cx="17" cy="17" r="17" fill="#2aa65a" />
        <path d="M17 0a17 17 0 0 1 15 9H17a8 8 0 0 0-7.500 5L3.500 6A17 17 0 0 1 17 0z" fill="#dc4a3c" />
        <path d="M32 9a17 17 0 0 1-15 25l7-13a8 8 0 0 0-1-12z" fill="#fbc92e" />
        <circle cx="17" cy="17" r="8" fill="#fff" />
        <circle cx="17" cy="17" r="6" fill="#4a86f0" />
      </svg>
    </div>
    <div className="ml-[8px] w-[73px] h-[60px] bg-[#333] flex items-center justify-center shrink-0 border-b-[3px] border-[#76f5e0]">
      <svg width="36" height="32" viewBox="0 0 36 32" className="overflow-visible">
        <path d="M8 1a1 1 0 0 1 1-1h18v8H8z" fill="#21a366" />
        <rect x="18" width="18" height="8" rx="1" fill="#33c481" />
        <rect x="8" y="8" width="14" height="8" fill="#21a366" /><rect x="22" y="8" width="14" height="8" fill="#21a366" />
        <rect x="8" y="16" width="14" height="8" fill="#107c41" /><rect x="22" y="16" width="14" height="8" fill="#107c41" />
        <path d="M8 24h28v7a1 1 0 0 1-1 1H9a1 1 0 0 1-1-1z" fill="#185c37" />
        <rect x="0" y="7" width="18" height="18" rx="1.500" fill="#107c41" />
        <text x="5" y="21" fontSize="13" fontWeight="700" fill="#fff" fontFamily="Open Sans">X</text>
      </svg>
    </div>
    <div className="ml-auto flex items-center text-white shrink-0">
      <svg width="18" height="10" viewBox="0 0 18 10"><path d="M1 9.500 9 1l8 8.500" fill="none" stroke="#fff" strokeWidth="1.200" /></svg>
      <svg width="25" height="18" viewBox="0 0 25 18" className="ml-[13px]"><path d="M2 0v4M7 0v4M1 4h7v4a3 3 0 0 1-7 0zM4.500 11v2H8" fill="none" stroke="#fff" strokeWidth="1.200" /><rect x="8" y="3" width="15" height="13" fill="#fff" stroke="#fff" /><rect x="23" y="7" width="2" height="5" fill="#fff" /></svg>
      <svg width="23" height="22" viewBox="0 0 23 22" className="ml-[12px]"><path d="M1 7h4l6-6v20l-6-6H1z" fill="none" stroke="#fff" strokeWidth="1.200" /><path d="M14 8c2 2 2 4 0 6M17 5c3 4 3 8 0 12M20 2c4 5 4 13 0 18" fill="none" stroke="#888" strokeWidth="1.100" /></svg>
      <svg width="24" height="17" viewBox="0 0 24 17" className="ml-[13px]"><path d="M4 17a4 4 0 0 1-1-7.800A7 7 0 0 1 16 6a5 5 0 0 1 4 11z" fill="#ddd" /><path d="M0 17h24v-4a4 4 0 0 0-4-4H8z" fill="#fff" /></svg>
      <svg width="20" height="20" viewBox="0 0 20 20" className="ml-[15px]"><path d="M1 19A17 17 0 0 1 18 1M5 19A13 13 0 0 1 18 5M9 19A9 9 0 0 1 18 9" fill="none" stroke="#bbb" strokeWidth="1" /><path d="M13 19a5 5 0 0 1 5-5" fill="none" stroke="#fff" strokeWidth="1.200" /><circle cx="17" cy="18" r="1.500" fill="#fff" /></svg>
      <span className="ml-[17px] w-[49px] text-[16px] text-[#eee]">ENG</span>
      <div className="w-[90px] pt-[2px] flex flex-col items-center text-[17.500px] leading-[28px] whitespace-nowrap text-[#eee]">
        <span>9:52 PM</span>
        <span>23/9/2020</span>
      </div>
      <div className="ml-[25px] relative w-[24px] h-[28px] mr-[31px]">
        <svg width="24" height="28" viewBox="0 0 24 28"><path d="M0 0h24v22H14l-5 6v-6H0z" fill="#fff" /><path d="M4 6h16M4 10h16M4 14h10" stroke="#222" strokeWidth="1.200" /></svg>
        <span className="absolute left-[12px] top-[12px] w-[24px] h-[24px] rounded-full bg-[#333] border border-[#777] flex items-center justify-center text-[15px] font-semibold text-white">4</span>
      </div>
      <div className="w-[2px] h-[60px] bg-[#555] mr-[5px]" />
    </div>
  </div>
);

export default function App() {
  return (
    <div className="w-[2016px] h-[1134px] bg-white overflow-hidden font-['Open_Sans',sans-serif]">
      <div className="w-[1920px] h-[1080px] flex flex-col overflow-hidden">
        <TitleBar />
        <TabRow />
        <Ribbon />
        <div className="h-[1px] bg-[#dcd9a8] shrink-0" />
        <MsgBar
          h="h-[44px] border-b border-[#e2dca0]"
          gap="ml-[28px]"
          icon={<svg width="34" height="34" viewBox="0 0 34 34" className="shrink-0"><circle cx="17" cy="17" r="15.500" fill="#fff" stroke="#d13438" strokeWidth="1.800" /><path d="M10 10l14 14M24 10 10 24" stroke="#d13438" strokeWidth="1.500" /></svg>}
          title="SIGN IN REQUIRED"
          text="We can't upload or download your changes because your cached credentials have expired."
        />
        <MsgBar
          h="h-[41px]"
          gap="ml-[35px]"
          under
          icon={<svg width="34" height="34" viewBox="0 0 34 34" className="shrink-0"><circle cx="17" cy="17" r="15.500" fill="#fff" stroke="#1e88d8" strokeWidth="1.800" /><path d="M17 15v11" stroke="#1e88d8" strokeWidth="2" /><circle cx="17" cy="10" r="1.500" fill="#1e88d8" /></svg>}
          title="SIGN IN TO OFFICE"
          text="It looks like your stored credentials are out of date. Please sign in as awesomeafiq95@gmail.com so we can verify your subscription."
        />
        <div className="h-[66px] bg-gradient-to-b from-[#cfcfcf] to-[#e6e6e6] to-[14%] flex items-start pt-[16px] shrink-0">
          <div className="ml-[7px] w-[151px] h-[35px] bg-white border border-[#c8c6c4] flex items-center pl-[6px] pr-[6px] justify-between text-[18.500px] text-[#444] font-['Lato',sans-serif] shrink-0">
            <span>A96</span>
            <svg width="8" height="5" viewBox="0 0 8 5"><path d="M0 0h8L4 5z" fill="#666" /></svg>
          </div>
          <div className="ml-[21px] w-[3px] h-[35px] flex flex-col justify-center gap-[4px] shrink-0">
            <span className="w-[3px] h-[4px] bg-[#aaa]" /><span className="w-[3px] h-[4px] bg-[#aaa]" /><span className="w-[3px] h-[4px] bg-[#aaa]" />
          </div>
          <div className="ml-[22px] w-[163px] h-[35px] bg-white border border-[#c8c6c4] flex items-center shrink-0">
            <svg width="16" height="16" viewBox="0 0 16 16" className="ml-[18px]"><path d="M1 1l14 14M15 1 1 15" stroke="#aaa" strokeWidth="2" /></svg>
            <svg width="20" height="16" viewBox="0 0 20 16" className="ml-[37px]"><path d="M1 9l6 5L19 1" fill="none" stroke="#aaa" strokeWidth="2.500" /></svg>
            <span className="ml-[33px] text-[24px] leading-[30px] italic font-semibold text-[#777] font-['Liberation_Serif',serif]">fx</span>
          </div>
          <div className="ml-[5px] w-[1541px] h-[35px] bg-white border border-[#c8c6c4] flex items-center justify-end pr-[7px] shrink-0">
            <svg width="12" height="8" viewBox="0 0 12 8"><path d="M1 1l5 5 5-5" fill="none" stroke="#666" strokeWidth="2.200" /></svg>
          </div>
        </div>
        <Sheet />
        <SheetTabs />
        <StatusBar />
        <Taskbar />
      </div>
    </div>
  );
}
